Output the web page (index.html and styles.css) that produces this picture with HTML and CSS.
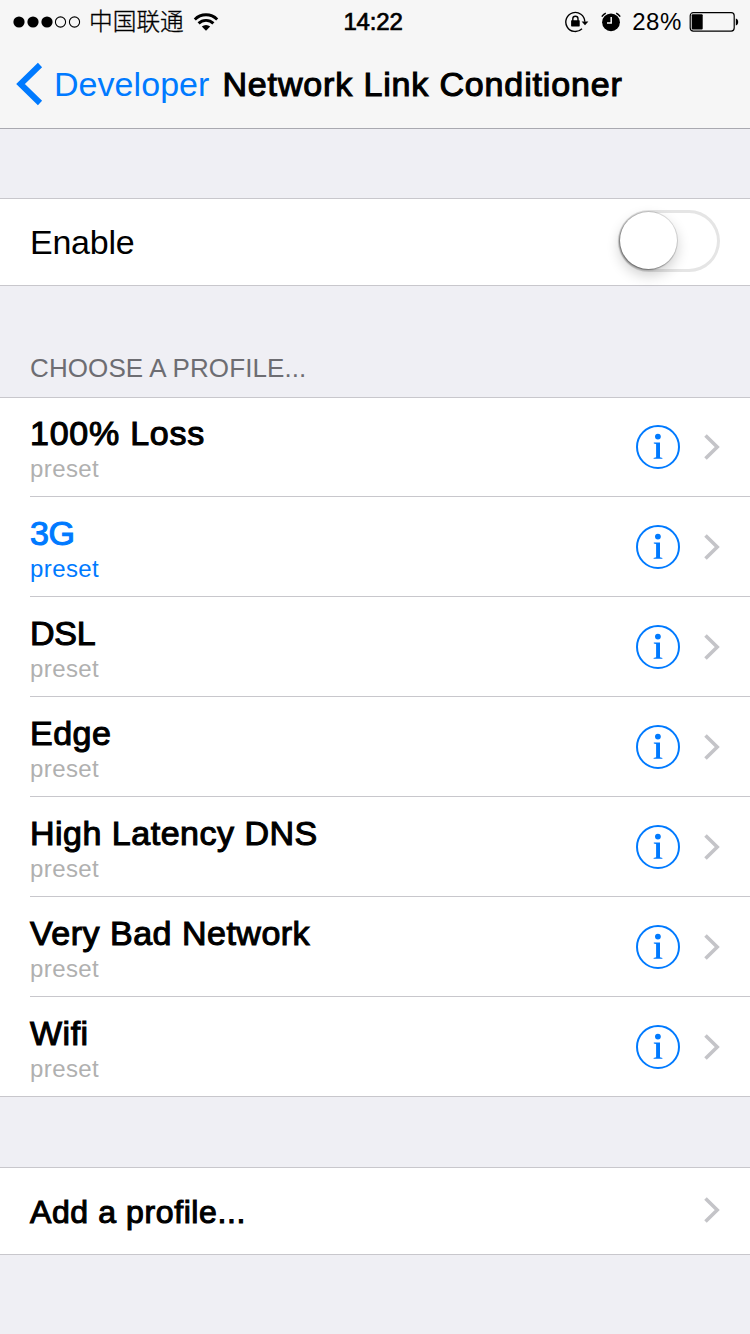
FILE: index.html
```html
<!DOCTYPE html>
<html lang="en">
<head>
<meta charset="utf-8">
<title>Network Link Conditioner</title>
<link rel="stylesheet" href="styles.css">
</head>
<body>
<svg class="defs" width="0" height="0" aria-hidden="true">
  <symbol id="info" viewBox="0 0 44 44">
    <circle cx="22" cy="22" r="21" fill="none" stroke="currentColor" stroke-width="2"/>
    <circle cx="21.9" cy="11.6" r="2.9" fill="currentColor"/>
    <path d="M17.8 17.4h6.2v14.800l2.400.7v.9h-8.800v-.9l2.500-.7V18.900l-2.300-.5z" fill="currentColor"/>
  </symbol>
  <symbol id="chevron" viewBox="0 0 16 26">
    <path d="M1.500 1.500 13.200 13 1.500 24.500" fill="none" stroke="currentColor" stroke-width="3.600"/>
  </symbol>
</svg>

<header class="header">
  <div class="status">
    <div class="status-left">
      <svg class="signal" width="68" height="14" viewBox="0 0 68 14">
        <circle cx="6" cy="7" r="5.600"/><circle cx="20" cy="7" r="5.600"/><circle cx="34" cy="7" r="5.600"/>
        <g fill="none" stroke="#000" stroke-width="1.100"><circle cx="47.500" cy="7" r="5.100"/><circle cx="61.500" cy="7" r="5.100"/></g>
      </svg>
      <span class="carrier" lang="zh-CN">中国联通</span>
      <svg class="wifi" width="26" height="20" viewBox="0 0 26 20">
        <g fill="none" stroke="#000" stroke-width="2.900"><path d="M1.800 7.400a15.800 15.800 0 0 1 22.400 0"/><path d="M5.600 11.400a10.500 10.500 0 0 1 14.800 0"/></g>
        <path d="M13 18.800 8.800 14.600a6 6 0 0 1 8.400 0z"/>
      </svg>
    </div>
    <span class="time">14:22</span>
    <div class="status-right">
      <svg class="lock" width="24" height="22" viewBox="0 0 24 22">
        <path d="M17 17.700A9.500 9.500 0 1 1 19.800 10.600" fill="none" stroke="#000" stroke-width="1.400"/>
        <path d="M16.600 10.500h6.800L20 14.300z"/>
        <rect x="6.100" y="9.200" width="8.600" height="6.200" rx=".6"/>
        <path d="M7.800 10V7.800a2.600 2.600 0 0 1 5.200 0V10" fill="none" stroke="#000" stroke-width="1.400"/>
      </svg>
      <svg class="alarm" width="20" height="20" viewBox="0 0 20 20">
        <circle cx="10" cy="10.300" r="8.900"/>
        <path d="M.8 4.600A11 11 0 0 1 4.800 1.100M19.200 4.600A11 11 0 0 0 15.200 1.100" fill="none" stroke="#000" stroke-width="1.500"/>
        <path d="M10.200 5v6.100H6" fill="none" stroke="#f6f6f6" stroke-width="1.500"/>
      </svg>
      <span class="percent">28%</span>
      <svg class="battery" width="50" height="20" viewBox="0 0 50 20">
        <rect x="1.200" y=".7" width="44" height="18.400" rx="3" fill="none" stroke="#000" stroke-width="1.200"/>
        <rect x="2.700" y="2.200" width="11" height="15.400" rx="1"/>
        <path d="M46.800 6.400c3.200.6 3.200 6.400 0 7z"/>
      </svg>
    </div>
  </div>
  <nav class="nav">
    <a class="back">
      <svg class="back-icon" width="28" height="44" viewBox="0 0 28 44"><path d="M25 3 5.500 22 25 41" fill="none" stroke="currentColor" stroke-width="6"/></svg>
      <span class="back-label">Developer</span>
    </a>
    <h1 class="title medium">Network Link Conditioner</h1>
  </nav>
</header>

<main>
  <section class="group group-enable">
    <div class="row row-single">
      <span class="enable-label">Enable</span>
      <span class="switch" role="switch" aria-checked="false"><span class="knob"></span></span>
    </div>
  </section>

  <h2 class="heading">CHOOSE A PROFILE...</h2>
  <ul class="group profiles">
    <li class="row"><div class="text"><span class="name medium wide">100% Loss</span><span class="sub">preset</span></div><svg class="info"><use href="#info"/></svg><svg class="chevron"><use href="#chevron"/></svg></li>
    <li class="row selected"><div class="text"><span class="name medium tight">3G</span><span class="sub">preset</span></div><svg class="info"><use href="#info"/></svg><svg class="chevron"><use href="#chevron"/></svg></li>
    <li class="row"><div class="text"><span class="name medium tight">DSL</span><span class="sub">preset</span></div><svg class="info"><use href="#info"/></svg><svg class="chevron"><use href="#chevron"/></svg></li>
    <li class="row"><div class="text"><span class="name medium">Edge</span><span class="sub">preset</span></div><svg class="info"><use href="#info"/></svg><svg class="chevron"><use href="#chevron"/></svg></li>
    <li class="row"><div class="text"><span class="name medium">High Latency DNS</span><span class="sub">preset</span></div><svg class="info"><use href="#info"/></svg><svg class="chevron"><use href="#chevron"/></svg></li>
    <li class="row"><div class="text"><span class="name medium">Very Bad Network</span><span class="sub">preset</span></div><svg class="info"><use href="#info"/></svg><svg class="chevron"><use href="#chevron"/></svg></li>
    <li class="row"><div class="text"><span class="name medium">Wifi</span><span class="sub">preset</span></div><svg class="info"><use href="#info"/></svg><svg class="chevron"><use href="#chevron"/></svg></li>
  </ul>

  <section class="group group-add">
    <div class="row row-single">
      <span class="add-label medium">Add a profile...</span>
      <svg class="chevron"><use href="#chevron"/></svg>
    </div>
  </section>
</main>
</body>
</html>
```
FILE: styles.css
```css
* { box-sizing: border-box; }

body {
  margin: 0;
  width: 750px;
  min-height: 1334px;
  background: #efeff4;
  color: #000;
  font-family: "Liberation Sans", Arial, "Noto Sans CJK SC", sans-serif;
  font-size: 34px;
}

svg { display: block; flex: none; }
.defs { position: absolute; }

/* Medium weight: the regular face with a thin stroke */
.medium {
  font-weight: 400;
  -webkit-text-stroke: 1.1px currentColor;
}

.header {
  height: 129px;
  background: #f6f6f6;
  border-bottom: 1px solid #a9a9b0;
}

.status {
  display: grid;
  grid-template-columns: 1fr auto 1fr;
  align-items: center;
  height: 40px;
  padding: 0 11px 0 13px;
  font-size: 24px;
  line-height: 40px;
}
.status-left, .status-right { display: flex; align-items: center; }
.status-right { justify-content: flex-end; }
.carrier {
  margin-left: 8px;
  padding-bottom: 3px;
  font-family: "Noto Sans CJK SC", sans-serif;
  font-weight: 300;
  font-size: 23.7px;
  -webkit-text-stroke: .3px currentColor;
}
.wifi { margin-left: 9px; }
.time { -webkit-text-stroke: .7px currentColor; padding: 1px 6px 0 0; letter-spacing: -.2px; }
.lock { margin-right: 1px; }
.alarm { margin-left: 11px; }
.percent { margin-left: 11px; letter-spacing: .6px; padding-top: 1px; }
.battery { margin-left: 7px; }

.nav {
  display: flex;
  align-items: center;
  height: 88px;
  padding-left: 15px;
}
.back { display: flex; align-items: center; color: #007aff; }
.back-label { margin-left: 11px; letter-spacing: .05px; }
.title { margin: 0 0 0 13px; font-size: 34px; letter-spacing: .85px; }

.group {
  margin: 0;
  padding: 0;
  list-style: none;
  background: #fff;
  border-top: 1px solid #c8c7cc;
  border-bottom: 1px solid #c8c7cc;
}
.group-enable { margin-top: 69px; }
.group-add { margin-top: 70px; }

.row {
  display: flex;
  align-items: center;
  height: 100px;
  margin-left: 30px;
  padding-right: 30px;
  border-bottom: 1px solid #c8c7cc;
}
.row:first-child { height: 99px; }
.row:last-child { height: 99px; border-bottom: 0; }
.row-single.row { height: 86px; justify-content: space-between; padding-bottom: 2px; }

.enable-label { padding-top: 2px; letter-spacing: -.25px; }
.switch {
  width: 102px;
  height: 62px;
  padding: 2px;
  border-radius: 31px;
  box-shadow: inset 0 0 0 3px #e5e5e5;
}
.knob {
  display: block;
  width: 57px;
  height: 57px;
  border-radius: 50%;
  background: #fff;
  box-shadow: 0 0 0 1px rgba(0,0,0,.12), -1px 1px 2px rgba(0,0,0,.4), 0 6px 14px rgba(0,0,0,.2);
}

.heading {
  margin: 0;
  height: 111px;
  padding: 67px 30px 0;
  font-size: 26px;
  line-height: 30px;
  letter-spacing: .1px;
  font-weight: 400;
  color: #6d6d72;
}

.text { flex: 1; display: flex; flex-direction: column; padding-top: 3px; }
.name { line-height: 40px; letter-spacing: .5px; }
.wide { letter-spacing: .75px; }
.tight { letter-spacing: -.3px; }
.sub { font-size: 24px; line-height: 31px; letter-spacing: .4px; color: #b0b0b0; }
.selected .text { color: #007aff; }
.selected .sub { color: inherit; }
.add-label { font-size: 32px; letter-spacing: .6px; padding-top: 4px; }

.info { width: 44px; height: 44px; color: #007aff; }
.chevron { width: 16px; height: 26px; margin-left: 24px; color: #c4c4c8; }
```
